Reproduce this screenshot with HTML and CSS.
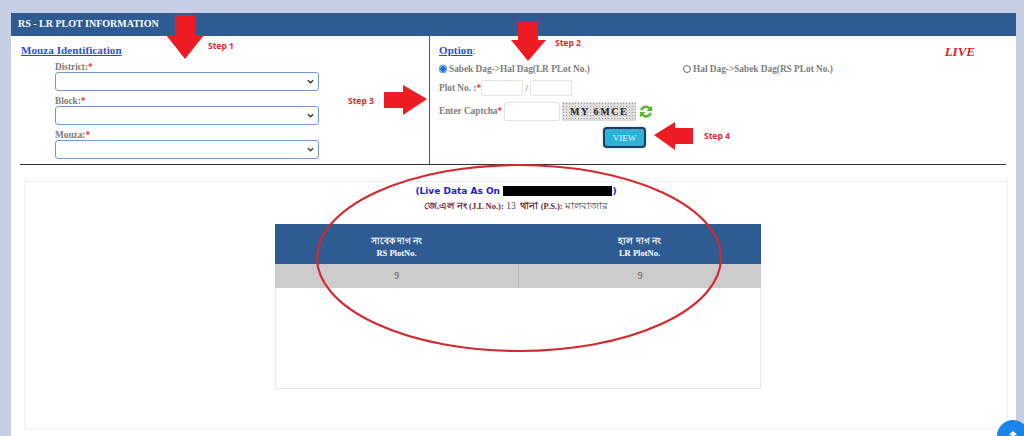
FILE: index.html
```html
<!DOCTYPE html>
<html lang="en">
<head>
<meta charset="utf-8">
<title>RS - LR Plot Information</title>
<link rel="stylesheet" href="styles.css">
</head>
<body>
<main class="panel">
  <h1 class="panel-title">RS - LR PLOT INFORMATION</h1>
  <form class="search">
    <section class="col col-left">
      <h2 class="sec-title">Mouza Identification</h2>
      <div class="fields">
        <label class="lbl">District:<b>*</b></label>
        <div class="sel"><svg viewBox="0 0 8 5" class="chev"><path d="M1 1l3 3 3-3"/></svg></div>
        <label class="lbl">Block:<b>*</b></label>
        <div class="sel"><svg viewBox="0 0 8 5" class="chev"><path d="M1 1l3 3 3-3"/></svg></div>
        <label class="lbl">Mouza:<b>*</b></label>
        <div class="sel"><svg viewBox="0 0 8 5" class="chev"><path d="M1 1l3 3 3-3"/></svg></div>
      </div>
    </section>
    <section class="col col-right">
      <h2 class="sec-title">Option<span class="colon">:</span></h2>
      <div class="radios">
        <label class="radio"><span class="dot on"></span>Sabek Dag-&gt;Hal Dag(LR PLot No.)</label>
        <label class="radio"><span class="dot"></span>Hal Dag-&gt;Sabek Dag(RS PLot No.)</label>
      </div>
      <div class="row plot-row">
        <span class="lbl">Plot No. :<b>*</b></span>
        <span class="inp inp-plot"></span><span class="slash">/</span><span class="inp inp-plot"></span>
      </div>
      <div class="row captcha-row">
        <span class="lbl">Enter Captcha<b>*</b></span>
        <span class="inp inp-cap"></span>
        <span class="captcha">MY 6MCE</span>
        <svg class="refresh" viewBox="0 0 16 16"><path d="M8 1a7 7 0 0 1 5 2.100L15 1v6.500H8.500l2.300-2.300A4 4 0 0 0 4.300 6.500H1.200A7 7 0 0 1 8 1z"/><path d="M8 15a7 7 0 0 1-5-2.100L1 15V8.500h6.500l-2.300 2.300a4 4 0 0 0 6.500-1.300h3.100A7 7 0 0 1 8 15z"/></svg>
      </div>
      <div class="view-wrap"><button type="button" class="view">VIEW</button></div>
      <div class="live">LIVE</div>
    </section>
  </form>
  <section class="result">
    <p class="asof">(Live Data As On <span class="redact">00/00/0000 00:00:00</span>)</p>
    <p class="meta"><span class="mk">জে.এল নং <small>(J.L No.):</small></span> 13 &nbsp;<span class="mk">থানা <small>(P.S.):</small></span> মালবাজার</p>
    <div class="tbl-box">
      <div class="thead">
        <div class="th">সাবেক দাগ নং<br>RS PlotNo.</div>
        <div class="th">হাল দাগ নং<br>LR PlotNo.</div>
      </div>
      <div class="tbody">
        <div class="td">9</div>
        <div class="td">9</div>
      </div>
    </div>
  </section>
</main>

<svg class="marks" viewBox="0 0 1024 436" aria-hidden="true">
  <g class="arrow">
    <polygon points="175,15 195,15 195,35 204,35 185,59 166,35 175,35"/>
    <polygon points="518,22 538,22 538,40 546,40 528,61 511,40 518,40"/>
    <polygon points="384,92 403,92 403,85 427,99 403,115 403,108 384,108"/>
    <polygon points="693,128 693,144 675,144 675,150 654,135 675,122 675,128"/>
  </g>
  <ellipse class="ring" cx="519" cy="258" rx="202" ry="93"/>
  <text class="step" x="208" y="49">Step 1</text>
  <text class="step" x="555" y="46">Step 2</text>
  <text class="step" x="348" y="104">Step 3</text>
  <text class="step" x="704" y="139">Step 4</text>
</svg>

<div class="to-top"><svg viewBox="0 0 12 12"><path d="M6 1L11 6H8V11H4V6H1z"/></svg></div>
</body>
</html>
```
FILE: styles.css
```css
* { box-sizing: border-box; }
html, body { height: 100%; }
body {
  margin: 0;
  height: 436px;
  overflow: hidden;
  background: #c6cfe4;
  padding: 13px 8px 0 11px;
  font-family: "Liberation Serif", "Noto Sans", serif;
  position: relative;
}
.panel { background: #fff; height: 423px; }
.panel-title {
  margin: 0;
  height: 23px;
  background: #2e5b92;
  color: #fff;
  font-size: 10px;
  line-height: 22px;
  font-weight: 700;
  padding-left: 7px;
}
.search {
  display: flex;
  height: 129px;
  margin: 0 10px 0 9px;
  border-bottom: 1px solid #333;
}
.col { position: relative; }
.col-left { width: 410px; border-right: 1px solid #555; }
.col-right { flex: 1; padding-left: 9px; }
.sec-title {
  margin: 0;
  padding-top: 7px;
  font-size: 11px;
  line-height: 14px;
  font-weight: 700;
  color: #1f4fd8;
  text-decoration: underline;
  letter-spacing: .1px;
}
.col-left .sec-title { padding-left: 1px; }
.colon { color: #666; font-weight: 400; display: inline-block; text-decoration: none; }
.fields { padding: 4px 0 0 35px; width: 299px; }
.lbl { display: block; font-size: 9.300px; line-height: 13px; font-weight: 700; color: #7d7d7d; }
.lbl b { color: #d33; }
.fields .lbl { padding-left: 0; height: 11px; line-height: 12px; }
.sel {
  height: 19px;
  width: 264px;
  margin-bottom: 4px;
  border: 1px solid #6f9bd1;
  border-radius: 3px;
  background: #fff;
  display: flex;
  align-items: center;
  justify-content: flex-end;
  padding-right: 4px;
}
.chev { width: 7px; height: 5px; fill: none; stroke: #333; stroke-width: 1.500; }
.radios { display: flex; padding-top: 6px; height: 23px; }
.radio {
  width: 244px;
  display: flex;
  align-items: center;
  gap: 2px;
  height: 12px;
  font-size: 9.300px;
  font-weight: 700;
  color: #7d7d7d;
}
.dot { width: 8px; height: 8px; border-radius: 50%; border: 1px solid #666; background: #fff; }
.dot.on { border: 0; background: radial-gradient(circle, #1a73e8 0 2.800px, #fff 3px 3.400px, #1a73e8 3.600px); }
.row { display: flex; align-items: center; }
.plot-row { height: 16px; }
.inp { height: 16px; border: 1px solid #e4e4e4; border-radius: 2px; background: #fff; display: block; }
.inp-plot { width: 42px; }
.slash { width: 7px; text-align: center; font-size: 10px; color: #666; }
.captcha-row { height: 19px; margin-top: 6px; }
.inp-cap { width: 56px; height: 19px; margin-left: 2px; }
.captcha {
  width: 74px;
  height: 19px;
  margin-left: 2px;
  background-color: #dcdcdc;
  background-image:
    radial-gradient(circle, #9a9a9a 0 .6px, transparent .8px),
    radial-gradient(circle, #f4f4f4 0 .6px, transparent .8px);
  background-size: 3px 3px, 4px 4px;
  background-position: 0 0, 1px 2px;
  color: #222;
  font-size: 10px;
  line-height: 19px;
  font-weight: 700;
  text-align: center;
  letter-spacing: 1.600px;
  white-space: nowrap;
}
.refresh { width: 14px; height: 15px; margin-left: 3px; fill: #5cb82e; }
.view-wrap { display: flex; padding: 6px 0 0 164px; }
.view {
  width: 43px;
  height: 21px;
  padding: 0;
  background: #2fb0d6;
  border: 2px solid #1d3e5e;
  border-radius: 4px;
  box-shadow: 0 0 2px #7fb5d6;
  color: #dff3fa;
  font: 400 9px "Liberation Serif", serif;
}
.live {
  position: absolute;
  top: 9px;
  right: 31px;
  color: #e02020;
  font-size: 13px;
  line-height: 14px;
  font-weight: 700;
  font-style: italic;
}
.result {
  margin: 16px 8px 0 13px;
  height: 248px;
  border: 1px solid #eee;
  padding-top: 3px;
}
.asof {
  margin: 0;
  text-align: center;
  font: 700 9px/13px "DejaVu Sans", sans-serif;
  color: #1c1ccc;
}
.redact { background: #000; color: #000; letter-spacing: .25px; }
.meta {
  margin: 2px 0 0;
  text-align: center;
  font-size: 9.500px;
  line-height: 13px;
  color: #444;
}
.mk { color: #6d1f3c; font-weight: 700; }
.mk small { font-size: 8.500px; }
.tbl-box {
  width: 486px;
  height: 165px;
  margin: 11px 0 0 250px;
  border: 1px solid #e8e8e8;
  border-top: 0;
}
.thead, .tbody { display: grid; grid-template-columns: 1fr 1fr; margin: 0 -1px; }
.thead { height: 40px; background: #2e5b92; color: #fff; }
.th {
  padding-top: 11px;
  text-align: center;
  font-size: 8.500px;
  line-height: 12px;
  font-weight: 700;
}
.tbody { height: 24px; background: #cbcbcb; }
.td {
  text-align: center;
  font-size: 9.500px;
  line-height: 24px;
  color: #555;
}
.td + .td { border-left: 1px solid #bbb; }
.marks { position: absolute; left: 0; top: 0; width: 1024px; height: 436px; pointer-events: none; }
.arrow { fill: #ed1c24; }
.ring { fill: none; stroke: #d42a2f; stroke-width: 2.200; }
.step { fill: #e02a2a; font: 700 8.500px "Open Sans", "Noto Sans", sans-serif; }
.to-top {
  position: absolute;
  left: 997px;
  top: 420px;
  width: 32px;
  height: 32px;
  border-radius: 50%;
  background: #1a84e8;
  display: flex;
  justify-content: center;
  padding-top: 10px;
}
.to-top svg { width: 10px; height: 10px; fill: #fff; }
```
